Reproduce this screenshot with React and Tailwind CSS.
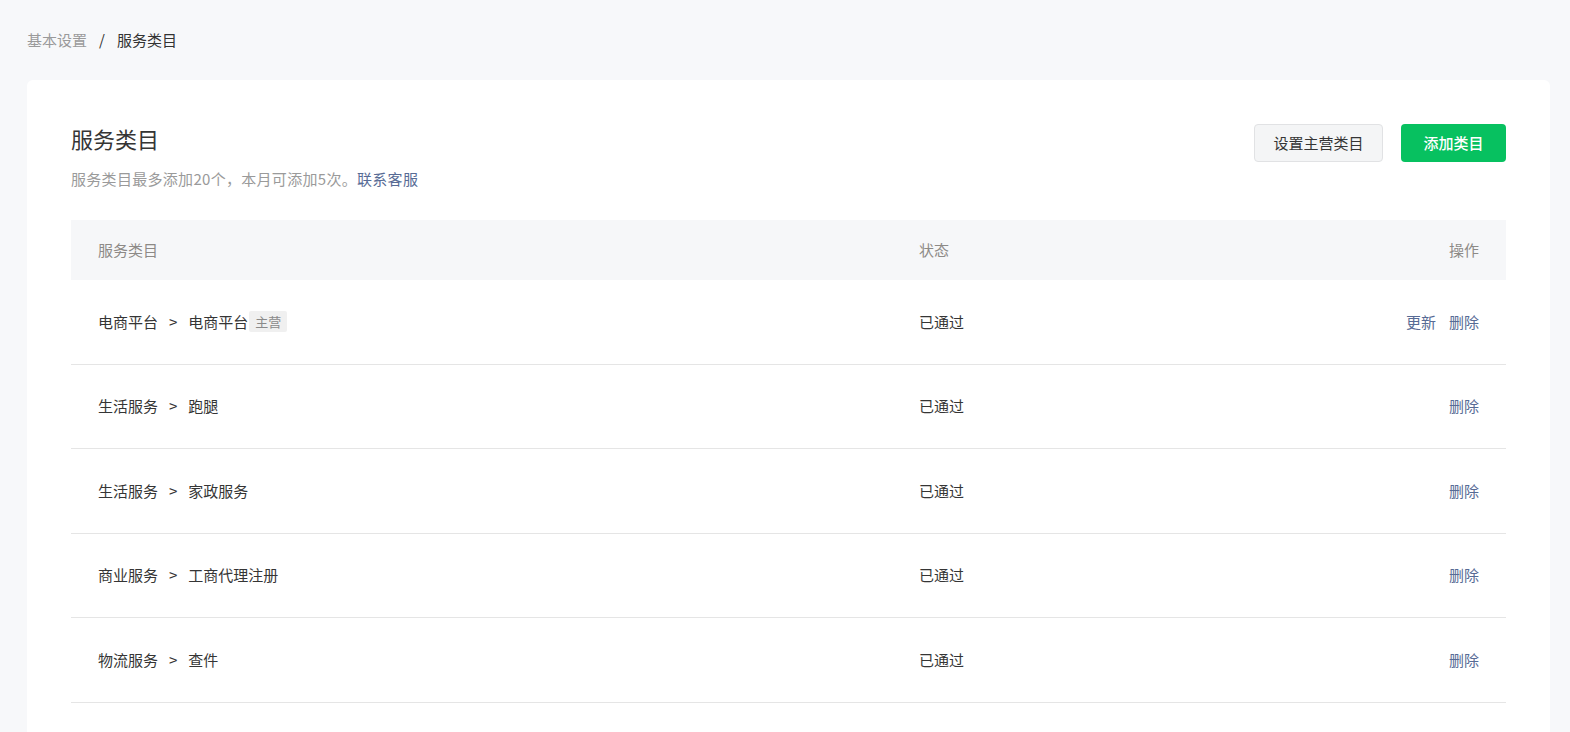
const rows = [
  { parent: "电商平台", child: "电商平台", main: true, actions: ["更新", "删除"] },
  { parent: "生活服务", child: "跑腿", actions: ["删除"] },
  { parent: "生活服务", child: "家政服务", actions: ["删除"] },
  { parent: "商业服务", child: "工商代理注册", actions: ["删除"] },
  { parent: "物流服务", child: "查件", actions: ["删除"] },
];

export default function App() {
  return (
    <div
      className="min-h-screen bg-[#f7f8fa] pl-[27px] pr-[20px]"
      style={{ fontFamily: '"Noto Sans CJK SC", "Noto Sans", sans-serif' }}
    >
      {/* breadcrumb */}
      <div className="flex items-center h-[80px] text-[15px]">
        <span className="text-[#9a9a9a]">基本设置</span>
        <span className="mx-[12px] text-[#333]">/</span>
        <span className="text-[#333]">服务类目</span>
      </div>

      <div className="bg-white rounded-[6px] px-[44px] pt-[44px] pb-[40px]">
        <div className="flex items-start justify-between">
          <div>
            <h1 className="text-[22px] leading-[34px] text-[#353535] -mt-[3px]">服务类目</h1>
            <p className="mt-[13px] text-[15px] leading-[22px] text-[#9a9a9a] tracking-[0.3px]">
              服务类目最多添加20个，本月可添加5次。
              <a href="#" className="text-[#576b95]">联系客服</a>
            </p>
          </div>
          <div className="flex items-center gap-[18px]">
            <button className="h-[38px] w-[129px] rounded-[4px] border border-[#e1e2e4] bg-[#f4f5f6] text-[15px] text-[#353535]">
              设置主营类目
            </button>
            <button className="h-[38px] w-[105px] rounded-[4px] bg-[#07c160] text-[15px] font-medium text-white">
              添加类目
            </button>
          </div>
        </div>

        <div className="mt-[30px]">
          <div className="grid grid-cols-[821px_1fr_auto] items-center h-[60px] px-[27px] bg-[#f6f7f9] text-[15px] text-[#8d8a87]">
            <span>服务类目</span>
            <span>状态</span>
            <span>操作</span>
          </div>
          {rows.map((r, i) => (
            <div
              key={i}
              className="grid grid-cols-[821px_1fr_auto] items-center h-[84.6px] px-[27px] border-b border-[#e5e5e5] text-[15px] text-[#353535]"
            >
              <div className="flex items-center">
                <span>{r.parent}</span>
                <span className="mx-[11px]">&gt;</span>
                <span>{r.child}</span>
                {r.main && (
                  <span className="ml-[1px] px-[6px] h-[21px] leading-[21px] bg-[#f0f0f0] text-[13px] text-[#8a8a8a] rounded-[2px]">
                    主营
                  </span>
                )}
              </div>
              <span>已通过</span>
              <div className="flex items-center gap-[13px]">
                {r.actions.map((a) => (
                  <a key={a} href="#" className="text-[#576b95]">
                    {a}
                  </a>
                ))}
              </div>
            </div>
          ))}
        </div>
      </div>
    </div>
  );
}
